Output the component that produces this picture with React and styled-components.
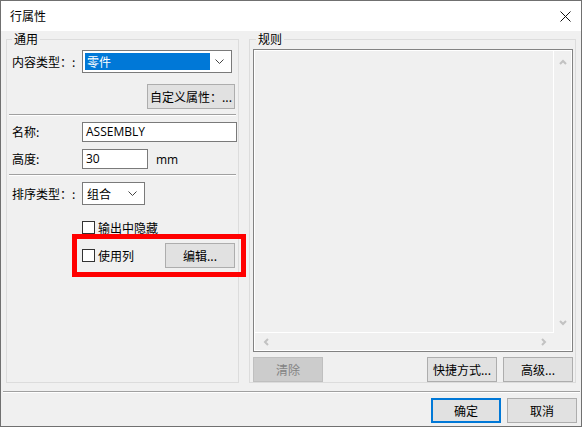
import styled, { createGlobalStyle } from "styled-components";

const GlobalStyle = createGlobalStyle`
  html, body {
    margin: 0;
    padding: 0;
    background: #ffffff;
  }
  * {
    box-sizing: border-box;
  }
  body {
    font-family: "Noto Sans CJK SC", "Noto Sans", sans-serif;
    font-size: 12px;
    color: #000;
  }
`;

const Window = styled.div`
  width: 582px;
  height: 427px;
  border: 1px solid #707070;
  display: flex;
  flex-direction: column;
  background: #f0f0f0;
`;

const TitleBar = styled.div`
  height: 30px;
  background: #ffffff;
  display: flex;
  align-items: center;
  justify-content: space-between;
  padding: 0 10px 0 9px;
  font-size: 12px;
  line-height: 16px;
`;

const CloseIcon = () => (
  <svg width="11" height="11" viewBox="0 0 11 11">
    <path d="M0.5 0.5 L10.5 10.5 M10.5 0.5 L0.5 10.5" stroke="#111" strokeWidth="1" fill="none" />
  </svg>
);

const Main = styled.div`
  display: flex;
  gap: 10px;
  padding: 0 5px;
  height: 352px;
`;

const Group = styled.fieldset`
  position: relative;
  margin: 0;
  padding: 0;
  border: 1px solid #dcdcdc;
  width: ${(p) => p.$width}px;
  height: 352px;
  display: flex;
  flex-direction: column;
  min-width: 0;
`;

const Legend = styled.legend`
  margin-left: ${(p) => p.$offset}px;
  padding: 0 2px;
  font-size: 12px;
  line-height: 16px;
  height: 16px;
`;

const Row = styled.div`
  position: relative;
  display: flex;
  align-items: center;
  margin-top: ${(p) => p.$top}px;
  padding-left: ${(p) => p.$indent ?? 5}px;
  height: ${(p) => p.$height}px;
  flex-shrink: 0;
`;

const FieldLabel = styled.span`
  width: 70px;
  white-space: nowrap;
  line-height: 16px;
`;

const Select = styled.div`
  width: ${(p) => p.$width}px;
  height: 23px;
  background: #ffffff;
  border: 1px solid #7a7a7a;
  display: flex;
  align-items: center;
  padding: 2px;
`;

const SelectValue = styled.div`
  flex: 1;
  height: 17px;
  line-height: 17px;
  padding-left: 2px;
  background: ${(p) => (p.$selected ? "#0078d7" : "transparent")};
  color: ${(p) => (p.$selected ? "#ffffff" : "#000")};
`;

const Chevron = styled.div`
  width: 19px;
  display: flex;
  align-items: center;
  justify-content: center;
`;

const ChevronDown = () => (
  <svg width="9" height="5" viewBox="0 0 9 5">
    <path d="M0.5 0.5 L4.5 4.5 L8.5 0.5" stroke="#444" strokeWidth="1" fill="none" />
  </svg>
);

const TextInput = styled.div`
  width: ${(p) => p.$width}px;
  height: 20px;
  background: #ffffff;
  border: 1px solid #7a7a7a;
  padding-left: 3px;
  line-height: 18px;
  font-family: "Open Sans", "Noto Sans", sans-serif;
  font-size: 12px;
`;

const Unit = styled.span`
  margin-left: 8px;
  font-family: "Open Sans", "Noto Sans", sans-serif;
  font-size: 12px;
`;

const Separator = styled.div`
  margin: ${(p) => p.$top}px 2px 0;
  height: 2px;
  border-top: 1px solid #a0a0a0;
  border-bottom: 1px solid #ffffff;
  flex-shrink: 0;
`;

const Button = styled.button`
  width: ${(p) => p.$width ?? 70}px;
  height: 25px;
  padding: 0;
  font-family: inherit;
  font-size: 12px;
  line-height: 16px;
  color: ${(p) => (p.disabled ? "#838383" : "#000")};
  background: ${(p) => (p.disabled ? "#cccccc" : "#e1e1e1")};
  border: ${(p) =>
    p.$default ? "2px solid #0078d7" : p.disabled ? "1px solid #bfbfbf" : "1px solid #adadad"};
  margin-left: ${(p) => (p.$push ? "auto" : "0")};
  margin-right: ${(p) => p.$right ?? 0}px;
  flex-shrink: 0;
`;

const CheckBox = styled.span`
  width: 13px;
  height: 13px;
  border: 1px solid #333333;
  background: #ffffff;
  flex-shrink: 0;
`;

const CheckLabel = styled.span`
  margin-left: 3px;
  line-height: 16px;
`;

const Highlight = styled.div`
  position: absolute;
  left: 65px;
  top: -9px;
  width: 174px;
  height: 43px;
  border: 5px solid #ff0000;
  pointer-events: none;
`;

const RuleList = styled.div`
  margin: 2px 2px 0 3px;
  height: 303px;
  border: 1px solid #828282;
  box-shadow: inset 0 0 0 1px #ffffff;
  padding: 1px;
  display: grid;
  grid-template-columns: 1fr 17px;
  grid-template-rows: 1fr 17px;
  flex-shrink: 0;
`;

const ListArea = styled.div`
  border-right: 1px solid #ffffff;
  border-bottom: 1px solid #ffffff;
`;

const ScrollBar = styled.div`
  display: flex;
  flex-direction: ${(p) => (p.$vertical ? "column" : "row")};
  justify-content: space-between;
  align-items: center;
  padding: ${(p) => (p.$vertical ? "8px 0 6px" : "0 6px 0 8px")};
`;

const Arrow = ({ dir }) => {
  const paths = {
    up: "M1 5 L4 2 L7 5",
    down: "M1 2 L4 5 L7 2",
    left: "M5 1 L2 4 L5 7",
    right: "M2 1 L5 4 L2 7",
  };
  return (
    <svg width="8" height="8" viewBox="0 0 8 8">
      <path d={paths[dir]} stroke="#c2c2c2" strokeWidth="2" fill="none" />
    </svg>
  );
};

const ButtonRow = styled.div`
  display: flex;
  gap: 6px;
  margin: 5px 2px 0 3px;
  flex-shrink: 0;
`;

const Footer = styled.div`
  display: flex;
  justify-content: flex-end;
  gap: 6px;
  padding: 5px 4px 0 0;
`;

const FooterRule = styled.div`
  margin: 8px 1px 0 2px;
  height: 2px;
  border-top: 1px solid #a0a0a0;
  border-bottom: 1px solid #ffffff;
`;

export default function App() {
  return (
    <>
      <GlobalStyle />
      <Window>
        <TitleBar>
          <span>行属性</span>
          <CloseIcon />
        </TitleBar>
        <Main>
          <Group $width={233}>
            <Legend $offset={5}>通用</Legend>
            <Row $top={3} $height={23}>
              <FieldLabel>内容类型：:</FieldLabel>
              <Select $width={150}>
                <SelectValue $selected>零件</SelectValue>
                <Chevron>
                  <ChevronDown />
                </Chevron>
              </Select>
            </Row>
            <Row $top={11} $height={25}>
              <Button $width={88} $push $right={3}>
                自定义属性：...
              </Button>
            </Row>
            <Separator $top={5} />
            <Row $top={6} $height={20}>
              <FieldLabel>名称:</FieldLabel>
              <TextInput $width={155}>ASSEMBLY</TextInput>
            </Row>
            <Row $top={7} $height={20}>
              <FieldLabel>高度:</FieldLabel>
              <TextInput $width={66}>30</TextInput>
              <Unit>mm</Unit>
            </Row>
            <Separator $top={5} />
            <Row $top={6} $height={23}>
              <FieldLabel>排序类型：:</FieldLabel>
              <Select $width={63}>
                <SelectValue>组合</SelectValue>
                <Chevron>
                  <ChevronDown />
                </Chevron>
              </Select>
            </Row>
            <Row $top={16} $height={13} $indent={75}>
              <CheckBox />
              <CheckLabel>输出中隐藏</CheckLabel>
            </Row>
            <Row $top={9} $height={25} $indent={75}>
              <CheckBox />
              <CheckLabel>使用列</CheckLabel>
              <Button $push $right={3}>
                编辑...
              </Button>
              <Highlight />
            </Row>
          </Group>
          <Group $width={327}>
            <Legend $offset={6}>规则</Legend>
            <RuleList>
              <ListArea />
              <ScrollBar $vertical>
                <Arrow dir="up" />
                <Arrow dir="down" />
              </ScrollBar>
              <ScrollBar>
                <Arrow dir="left" />
                <Arrow dir="right" />
              </ScrollBar>
              <div />
            </RuleList>
            <ButtonRow>
              <Button disabled>清除</Button>
              <Button $push>快捷方式...</Button>
              <Button>高级...</Button>
            </ButtonRow>
          </Group>
        </Main>
        <FooterRule />
        <Footer>
          <Button $default>确定</Button>
          <Button>取消</Button>
        </Footer>
      </Window>
    </>
  );
}
